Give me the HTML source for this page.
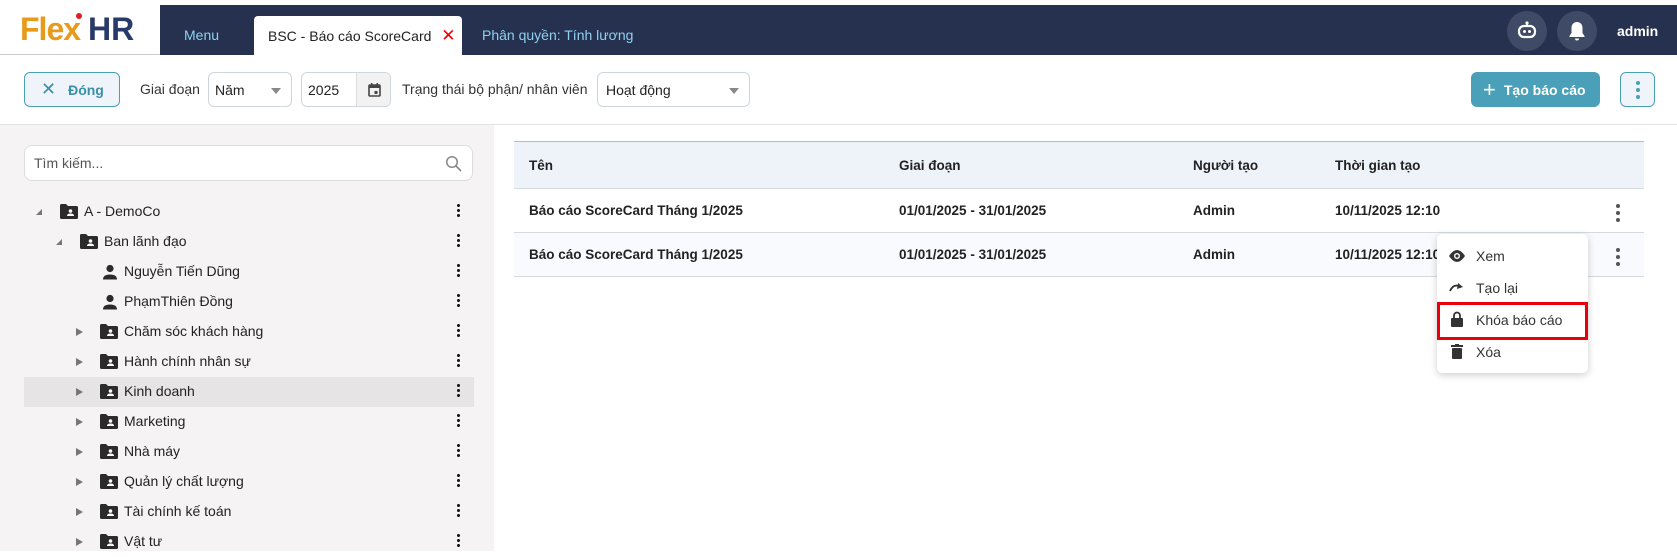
<!DOCTYPE html>
<html><head><meta charset="utf-8"><style>
*{box-sizing:border-box;margin:0;padding:0}
body{width:1677px;height:551px;overflow:hidden;background:#fff;font-family:"Liberation Sans",sans-serif;color:#222;position:relative;font-size:14px}
.abs{position:absolute}
.nav{left:0;top:5px;width:1677px;height:50px;background:#263150}
.logo{left:0;top:5px;width:160px;height:50px;background:#fff;border-bottom:1px solid #ccc}
.tab{top:16px;height:39px;line-height:39px;font-size:14px}
.btnb{border:1px solid #cfd6dc;border-radius:6px;background:#fff}
.tree .row{position:absolute;left:24px;width:450px;height:30px}
.tree .t{position:absolute;top:6px;font-size:14px;color:#222}
.tri{position:absolute;top:11px;width:0;height:0;border-left:7px solid #777;border-top:4px solid transparent;border-bottom:4px solid transparent}
.tri2{position:absolute;top:12px;width:0;height:0;border-right:6px solid #777;border-top:6px solid transparent}
.fold{position:absolute;top:7px;width:18px;height:15px}
.keb{position:absolute;left:433px;top:7px;width:4px}
.keb i{display:block;width:3px;height:3px;background:#111;border-radius:50%;margin-bottom:2px}
.cell{position:absolute;font-weight:bold;font-size:13.5px;color:#222}
.mi{position:absolute;left:1476px;font-size:14px;color:#333}
</style></head><body>
<div class="abs nav"></div>
<div class="abs logo"><span style="position:absolute;left:20px;top:6px;font-size:32px;font-weight:bold;color:#e89a1a;letter-spacing:-1px">Flex</span><span style="position:absolute;left:88px;top:6px;font-size:32px;font-weight:bold;color:#283a6a">HR</span><span style="position:absolute;left:76px;top:8px;width:6px;height:6px;border-radius:50%;background:#e02020"></span></div>
<div class="abs tab" style="left:184px;color:#8fd0f0">Menu</div>
<div class="abs tab" style="left:254px;width:208px;background:#fff;border-radius:4px 4px 0 0;padding-left:14px;color:#222">BSC - Báo cáo ScoreCard <span style="color:#e00;font-size:17px;margin-left:6px">✕</span></div>
<div class="abs tab" style="left:482px;color:#8fd0f0">Phân quyền: Tính lương</div>
<div class="abs" style="left:1507px;top:11px;width:40px;height:40px;border-radius:50%;background:#3e4a66"></div>
<svg class="abs" style="left:1515px;top:19px" width="24" height="24" viewBox="0 0 24 24"><circle cx="12" cy="4" r="1.6" fill="#fff"/><rect x="11.2" y="4" width="1.6" height="3" fill="#fff"/><rect x="4" y="7" width="16" height="11" rx="5" fill="none" stroke="#fff" stroke-width="2.2"/><circle cx="9.5" cy="12.5" r="1.5" fill="#fff"/><circle cx="14.5" cy="12.5" r="1.5" fill="#fff"/></svg>
<div class="abs" style="left:1557px;top:11px;width:40px;height:40px;border-radius:50%;background:#3e4a66"></div>
<svg class="abs" style="left:1567px;top:20px" width="20" height="22" viewBox="0 0 20 22"><path d="M10 2c-3.5 0-5.5 2.6-5.5 6v5L2.5 16v1h15v-1l-2-3V8c0-3.4-2-6-5.5-6z" fill="#fff"/><path d="M8 18.5a2 2 0 0 0 4 0z" fill="#fff"/></svg>
<div class="abs" style="left:1617px;top:23px;color:#fff;font-weight:bold;font-size:14px">admin</div>

<div class="abs" style="left:24px;top:72px;width:96px;height:35px;border:1px solid #4a9fb5;border-radius:6px;background:#eef4fa;color:#3a8fa8;font-weight:bold;font-size:14px;line-height:33px;padding-left:16px"><span style="font-size:18px;font-weight:normal;margin-right:12px">✕</span>Đóng</div>
<div class="abs" style="left:140px;top:81px;font-size:14px;color:#333">Giai đoạn</div>
<div class="abs btnb" style="left:208px;top:72px;width:84px;height:35px;padding:9px 6px;color:#222">Năm<span style="position:absolute;right:10px;top:15px;border-top:6px solid #888;border-left:5px solid transparent;border-right:5px solid transparent"></span></div>
<div class="abs btnb" style="left:301px;top:72px;width:90px;height:35px;padding:9px 6px;overflow:hidden">2025<span style="position:absolute;left:54px;top:0;width:36px;height:35px;background:#f2f2f2;border-left:1px solid #ddd"></span><svg style="position:absolute;left:66px;top:10px" width="13" height="14" viewBox="0 0 13 14"><rect x="1" y="2" width="11" height="11" rx="1" fill="none" stroke="#444" stroke-width="1.6"/><rect x="1" y="2" width="11" height="3" fill="#444"/><rect x="6.5" y="8" width="3" height="3" fill="#444"/><rect x="3" y="0" width="1.5" height="3" fill="#444"/><rect x="8.5" y="0" width="1.5" height="3" fill="#444"/></svg></div>
<div class="abs" style="left:402px;top:81px;font-size:14px;color:#333">Trạng thái bộ phận/ nhân viên</div>
<div class="abs btnb" style="left:597px;top:72px;width:153px;height:35px;padding:9px 8px">Hoạt động<span style="position:absolute;right:10px;top:15px;border-top:6px solid #888;border-left:5px solid transparent;border-right:5px solid transparent"></span></div>
<div class="abs" style="left:1471px;top:72px;width:129px;height:35px;border-radius:6px;background:#4aa0b8;color:#fff;font-weight:bold;font-size:14px;line-height:35px;padding-left:12px"><span style="font-size:22px;font-weight:normal;vertical-align:-2px;margin-right:8px">+</span>Tạo báo cáo</div>
<div class="abs" style="left:1620px;top:72px;width:35px;height:35px;border:1px solid #4a9fb5;border-radius:6px;background:#eef4fa"><i style="position:absolute;left:15px;top:8px;width:4px;height:4px;border-radius:50%;background:#4a9fb5"></i><i style="position:absolute;left:15px;top:15px;width:4px;height:4px;border-radius:50%;background:#4a9fb5"></i><i style="position:absolute;left:15px;top:22px;width:4px;height:4px;border-radius:50%;background:#4a9fb5"></i></div>
<div class="abs" style="left:0;top:124px;width:1677px;height:1px;background:#e3e3e3"></div>

<div class="abs" style="left:0;top:125px;width:494px;height:426px;background:#f5f3f4"></div>
<div class="abs" style="left:24px;top:145px;width:449px;height:36px;background:#fff;border:1px solid #ddd;border-radius:8px;padding:9px 9px;color:#555;font-size:14px">Tìm kiếm...<svg style="position:absolute;right:10px;top:9px" width="17" height="17" viewBox="0 0 17 17"><circle cx="7" cy="7" r="5.3" fill="none" stroke="#888" stroke-width="1.5"/><path d="M11 11l5 5" stroke="#888" stroke-width="1.6"/></svg></div>

<svg width="0" height="0" style="position:absolute"><defs>
<symbol id="fd" viewBox="0 0 18 15"><path d="M0 1.5Q0 0 1.5 0H6l2 2h8.5Q18 2 18 3.5v10Q18 15 16.5 15h-15Q0 15 0 13.5z" fill="#2b2b2b"/><circle cx="10.5" cy="7" r="1.8" fill="#fff"/><path d="M7 12q0-2.5 3.5-2.5T14 12z" fill="#fff"/></symbol>
<symbol id="ps" viewBox="0 0 16 16"><circle cx="8" cy="4.5" r="3.6" fill="#2b2b2b"/><path d="M1 15.5q0-5 7-5t7 5z" fill="#2b2b2b"/></symbol>
</defs></svg>

<div class="tree">
<div class="row" style="top:377px;background:#e6e4e5"></div>
<div class="row" style="top:197px"><span class="tri2" style="left:12px"></span><svg class="fold" style="left:36px"><use href="#fd"/></svg><span class="t" style="left:60px">A - DemoCo</span><span class="keb"><i></i><i></i><i></i></span></div>
<div class="row" style="top:227px"><span class="tri2" style="left:32px"></span><svg class="fold" style="left:56px"><use href="#fd"/></svg><span class="t" style="left:80px">Ban lãnh đạo</span><span class="keb"><i></i><i></i><i></i></span></div>
<div class="row" style="top:257px"><svg class="fold" style="left:78px;width:16px;height:16px"><use href="#ps"/></svg><span class="t" style="left:100px">Nguyễn Tiến Dũng</span><span class="keb"><i></i><i></i><i></i></span></div>
<div class="row" style="top:287px"><svg class="fold" style="left:78px;width:16px;height:16px"><use href="#ps"/></svg><span class="t" style="left:100px">PhạmThiên Đồng</span><span class="keb"><i></i><i></i><i></i></span></div>
<div class="row" style="top:317px"><span class="tri" style="left:52px"></span><svg class="fold" style="left:76px"><use href="#fd"/></svg><span class="t" style="left:100px">Chăm sóc khách hàng</span><span class="keb"><i></i><i></i><i></i></span></div>
<div class="row" style="top:347px"><span class="tri" style="left:52px"></span><svg class="fold" style="left:76px"><use href="#fd"/></svg><span class="t" style="left:100px">Hành chính nhân sự</span><span class="keb"><i></i><i></i><i></i></span></div>
<div class="row" style="top:377px"><span class="tri" style="left:52px"></span><svg class="fold" style="left:76px"><use href="#fd"/></svg><span class="t" style="left:100px">Kinh doanh</span><span class="keb"><i></i><i></i><i></i></span></div>
<div class="row" style="top:407px"><span class="tri" style="left:52px"></span><svg class="fold" style="left:76px"><use href="#fd"/></svg><span class="t" style="left:100px">Marketing</span><span class="keb"><i></i><i></i><i></i></span></div>
<div class="row" style="top:437px"><span class="tri" style="left:52px"></span><svg class="fold" style="left:76px"><use href="#fd"/></svg><span class="t" style="left:100px">Nhà máy</span><span class="keb"><i></i><i></i><i></i></span></div>
<div class="row" style="top:467px"><span class="tri" style="left:52px"></span><svg class="fold" style="left:76px"><use href="#fd"/></svg><span class="t" style="left:100px">Quản lý chất lượng</span><span class="keb"><i></i><i></i><i></i></span></div>
<div class="row" style="top:497px"><span class="tri" style="left:52px"></span><svg class="fold" style="left:76px"><use href="#fd"/></svg><span class="t" style="left:100px">Tài chính kế toán</span><span class="keb"><i></i><i></i><i></i></span></div>
<div class="row" style="top:527px"><span class="tri" style="left:52px"></span><svg class="fold" style="left:76px"><use href="#fd"/></svg><span class="t" style="left:100px">Vật tư</span><span class="keb"><i></i><i></i><i></i></span></div>
</div>

<div class="abs" style="left:514px;top:141px;width:1130px;height:48px;background:#eef3fa;border-top:1px solid #bbb;border-bottom:1px solid #d5dae0"></div>
<div class="abs" style="left:514px;top:189px;width:1130px;height:44px;background:#fff;border-bottom:1px solid #d5dae0"></div>
<div class="abs" style="left:514px;top:233px;width:1130px;height:44px;background:#f8fafd;border-bottom:1px solid #d5dae0"></div>
<div class="cell" style="left:529px;top:158px">Tên</div>
<div class="cell" style="left:899px;top:158px">Giai đoạn</div>
<div class="cell" style="left:1193px;top:158px">Người tạo</div>
<div class="cell" style="left:1335px;top:158px">Thời gian tạo</div>
<div class="cell" style="left:529px;top:203px">Báo cáo ScoreCard Tháng 1/2025</div>
<div class="cell" style="left:899px;top:203px">01/01/2025 - 31/01/2025</div>
<div class="cell" style="left:1193px;top:203px">Admin</div>
<div class="cell" style="left:1335px;top:203px">10/11/2025 12:10</div>
<div class="cell" style="left:529px;top:247px">Báo cáo ScoreCard Tháng 1/2025</div>
<div class="cell" style="left:899px;top:247px">01/01/2025 - 31/01/2025</div>
<div class="cell" style="left:1193px;top:247px">Admin</div>
<div class="cell" style="left:1335px;top:247px">10/11/2025 12:10</div>
<div class="abs" style="left:1616px;top:204px"><i style="display:block;width:4px;height:4px;border-radius:50%;background:#555;margin-bottom:3px"></i><i style="display:block;width:4px;height:4px;border-radius:50%;background:#555;margin-bottom:3px"></i><i style="display:block;width:4px;height:4px;border-radius:50%;background:#555"></i></div>
<div class="abs" style="left:1616px;top:248px"><i style="display:block;width:4px;height:4px;border-radius:50%;background:#555;margin-bottom:3px"></i><i style="display:block;width:4px;height:4px;border-radius:50%;background:#555;margin-bottom:3px"></i><i style="display:block;width:4px;height:4px;border-radius:50%;background:#555"></i></div>

<div class="abs" style="left:1437px;top:234px;width:151px;height:139px;background:#fff;border-radius:5px;box-shadow:0 2px 8px rgba(0,0,0,.2)"></div>
<svg class="abs" style="left:1449px;top:250px" width="16" height="12" viewBox="0 0 16 12"><path d="M0 6Q4 0 8 0t8 6q-4 6-8 6T0 6z" fill="#333"/><circle cx="8" cy="6" r="3" fill="#fff"/><circle cx="8" cy="6" r="1.6" fill="#333"/></svg>
<div class="mi" style="top:248px">Xem</div>
<svg class="abs" style="left:1449px;top:282px" width="16" height="10" viewBox="0 0 16 10"><path d="M1 9Q4 2 10 4" fill="none" stroke="#333" stroke-width="1.8"/><path d="M9 1l5 4-6 2z" fill="#333"/></svg>
<div class="mi" style="top:280px">Tạo lại</div>
<div class="abs" style="left:1437px;top:302px;width:151px;height:38px;border:3px solid #e8000a"></div>
<svg class="abs" style="left:1451px;top:311px" width="12" height="16" viewBox="0 0 12 16"><path d="M3 7V4.5a3 3 0 0 1 6 0V7" fill="none" stroke="#333" stroke-width="1.8"/><rect x="0" y="7" width="12" height="9" rx="1" fill="#333"/></svg>
<div class="mi" style="top:312px">Khóa báo cáo</div>
<svg class="abs" style="left:1451px;top:344px" width="12" height="15" viewBox="0 0 12 15"><rect x="0" y="1" width="12" height="2" fill="#333"/><rect x="4" y="0" width="4" height="2" fill="#333"/><rect x="1" y="4" width="10" height="11" rx="1" fill="#333"/></svg>
<div class="mi" style="top:344px">Xóa</div>
</body></html>
